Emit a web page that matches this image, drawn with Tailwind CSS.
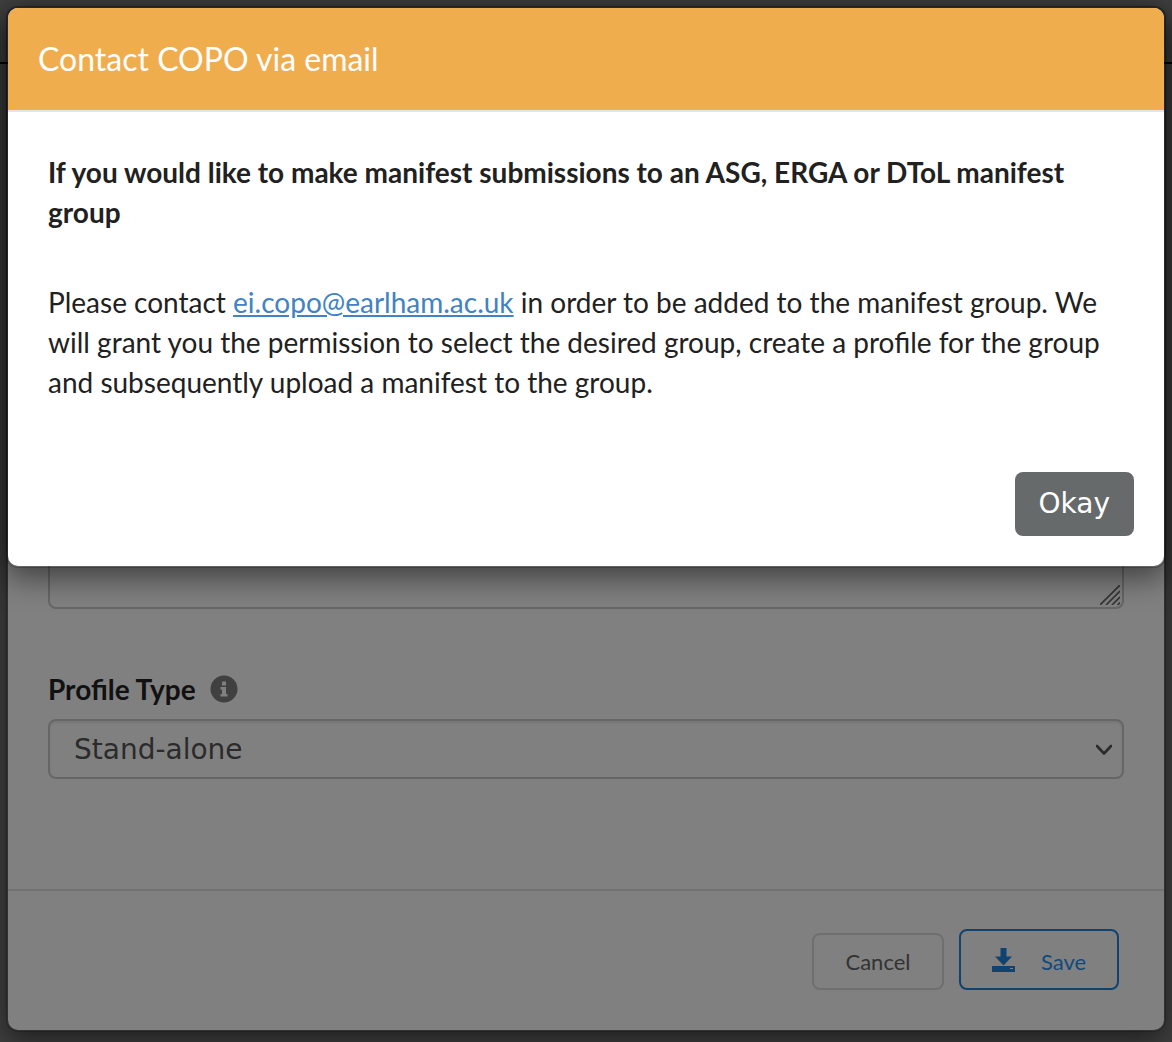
<!DOCTYPE html>
<html lang="en">
<head>
<meta charset="utf-8">
<meta name="viewport" content="width=device-width, initial-scale=1">
<title>Contact COPO via email</title>
<script src="https://cdn.jsdelivr.net/npm/@tailwindcss/browser@4"></script>
</head>
<body class="min-h-screen bg-[#404040] font-['Lato',sans-serif] text-[28px] leading-10 text-[#212121]">
  <div class="relative min-h-screen overflow-hidden p-1.5 pb-2.5">
    <div class="absolute inset-x-0 top-0 h-16 border-b-2 border-black"></div>

    <!-- Profile form, dimmed behind the notice -->
    <form class="relative rounded-xl border-2 border-black/20 bg-[#808080] bg-clip-padding text-[#111] shadow-[0_10px_30px_rgba(0,0,0,0.5)]">
      <div class="px-10 pt-[392px] pb-[110px]">
        <div class="relative">
          <textarea aria-label="Description" class="block h-[209px] w-full resize-none rounded-lg border-2 border-[#666] bg-transparent"></textarea>
          <svg class="absolute right-1 bottom-1 size-5" viewBox="0 0 20 20" stroke="#333" stroke-width="1.6" fill="none" aria-hidden="true"><path d="M0 20 20 0M6 20 20 6M12 20l8-8M17.500 20l2.500-2.500"/></svg>
        </div>
        <div class="mt-15 flex h-10 items-center gap-3.5">
          <label for="ptype" class="font-bold">Profile Type</label>
          <svg class="size-7" viewBox="0 0 28 28" aria-hidden="true"><circle cx="14" cy="14" r="13.500" fill="#404040"/><path fill="#808080" d="M12 6.500h4v4h-4zM10.500 12H16v7h1.500v2.500h-7V19H12v-4.500h-1.500z"/></svg>
        </div>
        <div class="relative mt-2.5">
          <select id="ptype" class="block h-[60px] w-full appearance-none rounded-lg border-2 border-[#666] bg-transparent px-6 pt-0.5 font-['DejaVu_Sans',sans-serif] text-[28px] leading-9 text-[#2b2b2b] shadow-[inset_0_2px_2px_rgba(0,0,0,0.075)]"><option>Stand-alone</option></select>
          <svg class="pointer-events-none absolute top-[25px] right-3 h-3 w-4" viewBox="0 0 16 12" fill="none" stroke="#2b2b2b" stroke-width="2.600" stroke-linecap="round" stroke-linejoin="round" aria-hidden="true"><path d="m1 2 7 7.500L15 2"/></svg>
        </div>
      </div>
      <div class="flex items-end justify-end gap-[15px] border-t-2 border-[#727272] px-[45px] pt-[38px] pb-10 text-[22px] leading-8">
        <button type="button" class="h-[57px] w-[132px] rounded-lg border-2 border-[#6f6f6f] text-[#333]">Cancel</button>
        <button type="button" class="flex h-[61px] w-40 items-center justify-center gap-[26px] rounded-lg border-2 border-[#104370] pt-1 text-[#104a7c]">
          <svg class="-mt-1 h-6 w-[23px]" viewBox="0 0 23 24" fill="#104370" aria-hidden="true"><path d="M8.500 0h6v8.500H20L11.500 17.500 3 8.500h5.500z"/><path fill-rule="evenodd" d="M0 18h23v6H0zM18 20v1h3v-1z"/></svg>
          Save
        </button>
      </div>
    </form>

    <!-- Contact notice -->
    <div role="dialog" aria-labelledby="notice-title" class="absolute inset-x-1.5 top-1.5 rounded-xl border-2 border-black/20 bg-white bg-clip-padding shadow-[0_10px_30px_rgba(0,0,0,0.5)]">
      <div class="rounded-t-[10px] border-b-2 border-[#e5e5e5] bg-[#f0ad4e] p-[30px]">
        <h4 id="notice-title" class="text-[32px] leading-[42px] text-white">Contact COPO via email</h4>
      </div>
      <div class="px-10 pt-10">
        <p class="font-bold">If you would like to make manifest submissions to an ASG, ERGA or DToL manifest group</p>
        <p class="mt-[50px]">Please contact <a href="mailto:ei.copo@earlham.ac.uk" class="text-[#4183c4] underline">ei.copo@earlham.ac.uk</a> in order to be added to the manifest group. We will grant you the permission to select the desired group, create a profile for the group and subsequently upload a manifest to the group.</p>
      </div>
      <div class="flex justify-end px-[30px] pt-[70px] pb-[30px]">
        <button type="button" class="h-16 rounded-lg bg-[#666a6a] px-6 font-['DejaVu_Sans',sans-serif] text-[28px] leading-10 text-white">Okay</button>
      </div>
    </div>
  </div>
</body>
</html>
